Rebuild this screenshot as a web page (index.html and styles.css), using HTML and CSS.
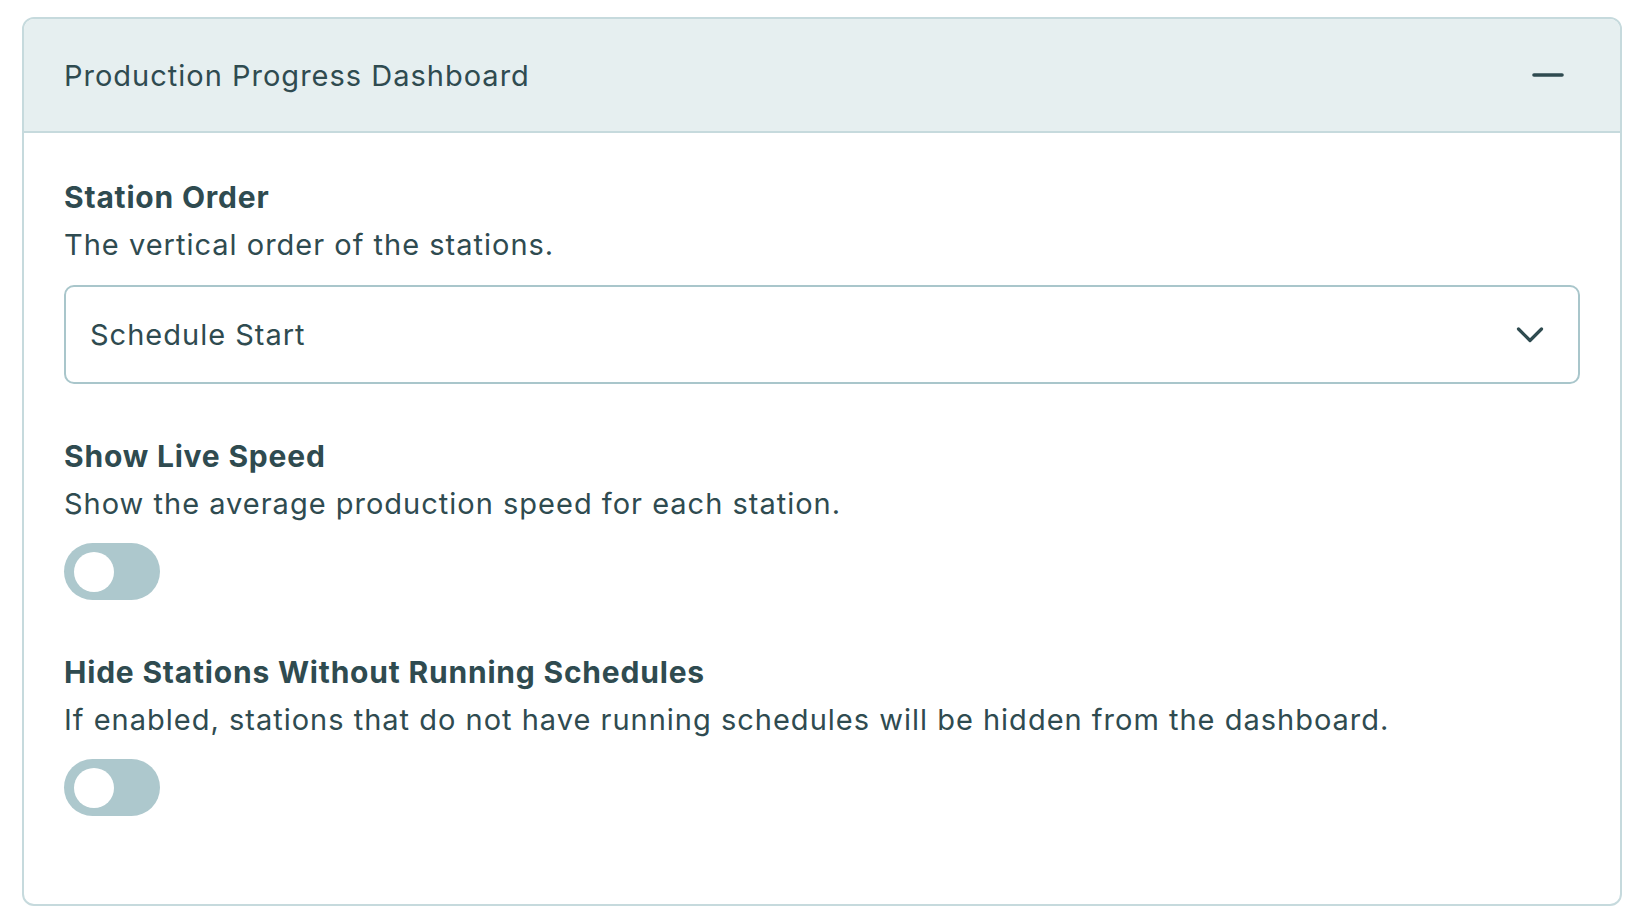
FILE: index.html
```html
<!DOCTYPE html>
<html lang="en">
<head>
<meta charset="utf-8">
<title>Production Progress Dashboard</title>
<link rel="stylesheet" href="styles.css">
</head>
<body>
<section class="card">
  <header class="card-header">
    <h1 class="card-title">Production Progress Dashboard</h1>
    <button class="collapse-btn" type="button" aria-label="Collapse">
      <svg width="32" height="6" viewBox="0 0 32 6"><line x1="2" y1="3" x2="30" y2="3" stroke="#2f4b50" stroke-width="3.6" stroke-linecap="round"/></svg>
    </button>
  </header>
  <div class="card-body">
    <div class="field">
      <div class="field-label">Station Order</div>
      <div class="field-desc">The vertical order of the stations.</div>
      <div class="select">
        <span class="select-value">Schedule Start</span>
        <svg class="chevron" width="28" height="18" viewBox="0 0 28 18"><polyline points="2.5,3 14,14.5 25.5,3" fill="none" stroke="#2f4b50" stroke-width="3.2" stroke-linecap="round" stroke-linejoin="round"/></svg>
      </div>
    </div>
    <div class="field">
      <div class="field-label">Show Live Speed</div>
      <div class="field-desc">Show the average production speed for each station.</div>
      <div class="toggle"><span class="knob"></span></div>
    </div>
    <div class="field">
      <div class="field-label">Hide Stations Without Running Schedules</div>
      <div class="field-desc">If enabled, stations that do not have running schedules will be hidden from the dashboard.</div>
      <div class="toggle"><span class="knob"></span></div>
    </div>
  </div>
</section>
</body>
</html>
```

FILE: styles.css
```css
* { box-sizing: border-box; }
html, body { margin: 0; padding: 0; background: #ffffff; }
body {
  padding: 17px 18px 18px 22px;
  font-family: "Inter", "Liberation Sans", sans-serif;
  color: #2f4b50;
}
.card {
  border: 2px solid #c6dadd;
  border-radius: 12px;
  overflow: hidden;
  background: #ffffff;
}
.card-header {
  height: 114px;
  background: #e6eff0;
  border-bottom: 2px solid #c6dadd;
  display: flex;
  align-items: center;
  justify-content: space-between;
  padding: 0 56px 0 40px;
}
.card-title {
  margin: 0;
  font-size: 29px;
  font-weight: 400;
  color: #2f4b50;
  letter-spacing: 1px;
}
.collapse-btn {
  border: 0;
  background: transparent;
  padding: 0;
  display: flex;
  cursor: pointer;
}
.card-body {
  padding: 40px 40px 40px 40px;
}
.field {
  margin-bottom: 48px;
  display: flex;
  flex-direction: column;
  align-items: flex-start;
}
.field-label {
  font-size: 30px;
  font-weight: 700;
  line-height: 48px;
  letter-spacing: 0.8px;
}
.field-desc {
  font-size: 29px;
  font-weight: 400;
  line-height: 48px;
  letter-spacing: 1px;
}
.select {
  margin-top: 16px;
  width: 100%;
  height: 99px;
  border: 2px solid #a9c6cb;
  border-radius: 10px;
  display: flex;
  align-items: center;
  justify-content: space-between;
  padding: 0 34px 0 24px;
}
.select-value {
  font-size: 29px;
  letter-spacing: 1px;
}
.toggle {
  margin-top: 15px;
  width: 96px;
  height: 57px;
  border-radius: 29px;
  background: #adc8cd;
  display: flex;
  align-items: center;
  padding-left: 10px;
}
.knob {
  width: 40px;
  height: 40px;
  border-radius: 50%;
  background: #ffffff;
}
```
